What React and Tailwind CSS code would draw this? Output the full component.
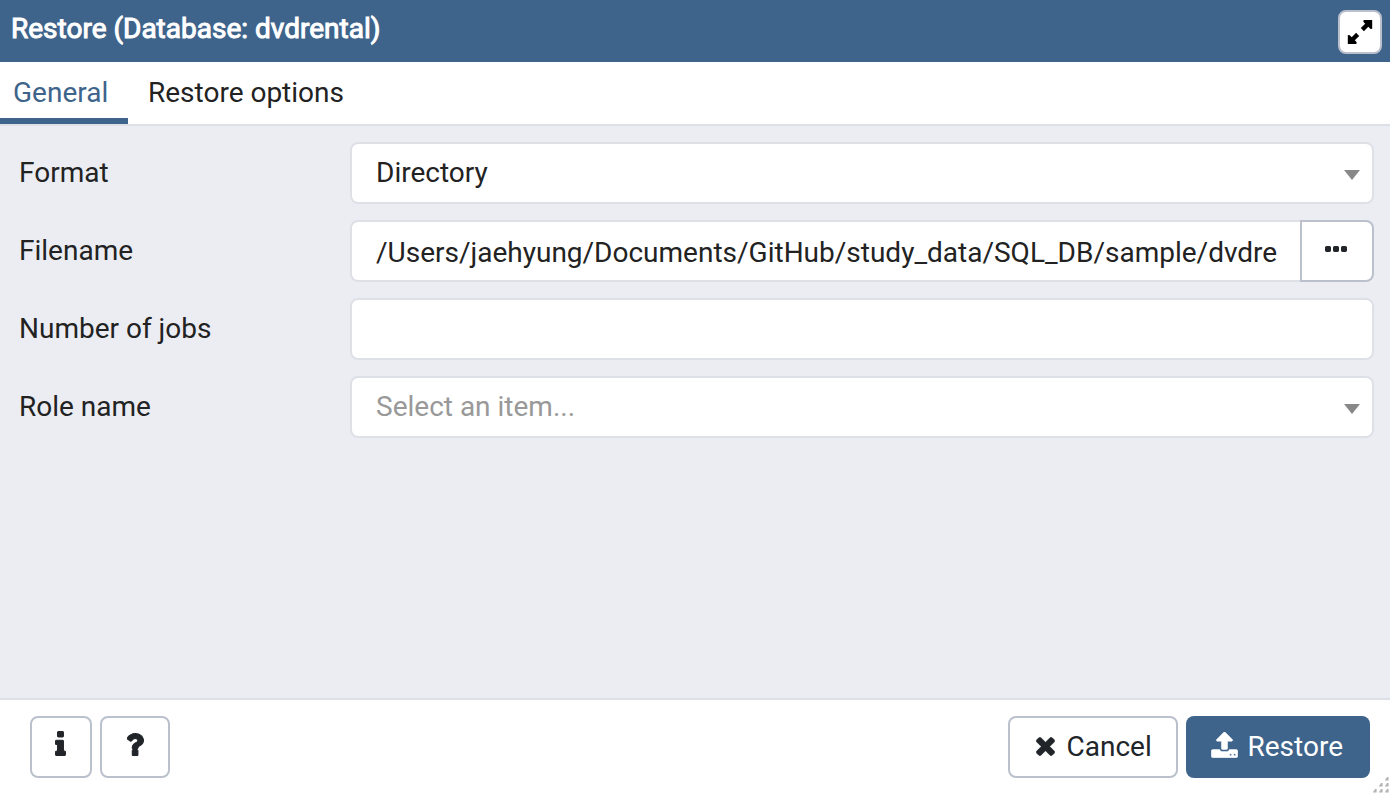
import React from "react";

function Glyph({ box, className, d, weight = 0 }) {
  return (
    <svg viewBox={box} preserveAspectRatio="none" fill="currentColor" className={className} aria-hidden="true">
      <path fillRule="evenodd" d={d} stroke="currentColor" strokeWidth={weight} strokeLinejoin="round" />
    </svg>
  );
}

const TIMES =
  "M1490 1322q0 40-28 68l-136 136q-28 28-68 28t-68-28l-294-294-294 294q-28 28-68 28t-68-28l-136-136q-28-28-28-68t28-68l294-294-294-294q-28-28-28-68t28-68l136-136q28-28 68-28t68 28l294 294 294-294q28-28 68-28t68 28l136 136q28 28 28 68t-28 68l-294 294 294 294q28 28 28 68z";
const UPLOAD =
  "M1344 1472q0-26-19-45t-45-19-45 19-19 45 19 45 45 19 45-19 19-45zm256 0q0-26-19-45t-45-19-45 19-19 45 19 45 45 19 45-19 19-45zm128-224v320q0 40-28 68t-68 28h-1472q-40 0-68-28t-28-68v-320q0-40 28-68t68-28h427q21 56 70.5 92t110.5 36h256q61 0 110.5-36t70.5-92h427q40 0 68 28t28 68zm-325-648q-17 40-59 40h-256v448q0 26-19 45t-45 19h-256q-26 0-45-19t-19-45v-448h-256q-42 0-59-40-17-39 14-69l448-448q18-19 45-19t45 19l448 448q31 30 14 69z";
const INFO =
  "M1216 1344v128q0 26-19 45t-45 19h-512q-26 0-45-19t-19-45v-128q0-26 19-45t45-19h64v-384h-64q-26 0-45-19t-19-45v-128q0-26 19-45t45-19h384q26 0 45 19t19 45v576h64q26 0 45 19t19 45zm-128-1152v192q0 26-19 45t-45 19h-256q-26 0-45-19t-19-45v-192q0-26 19-45t45-19h256q26 0 45 19t19 45z";
const QUESTION =
  "M1088 1256v240q0 16-12 28t-28 12h-240q-16 0-28-12t-12-28v-240q0-16 12-28t28-12h240q16 0 28 12t12 28zm316-600q0 54-15.5 101t-35 76.5-55 59.5-57.5 43.5-61 35.5q-41 23-68.5 65t-27.5 67q0 17-12 32.5t-28 15.5h-240q-15 0-25.5-18.5t-10.5-37.5v-45q0-83 65-156.5t143-108.5q59-27 84-56t25-76q0-42-46.5-74t-107.5-32q-65 0-108 29-35 25-107 115-13 16-31 16-12 0-25-8l-164-125q-13-10-15.5-25t5.5-28q160-266 464-266 80 0 161 31t146 83 106 127.5 41 158.5z";
const ELLIPSIS =
  "M576 736v192q0 40-28 68t-68 28h-192q-40 0-68-28t-28-68v-192q0-40 28-68t68-28h192q40 0 68 28t28 68zm512 0v192q0 40-28 68t-68 28h-192q-40 0-68-28t-28-68v-192q0-40 28-68t68-28h192q40 0 68 28t28 68zm512 0v192q0 40-28 68t-68 28h-192q-40 0-68-28t-28-68v-192q0-40 28-68t68-28h192q40 0 68 28t28 68z";

function Row({ label, children }) {
  return (
    <div className="flex h-[62px]">
      <div className="w-[331px] shrink-0 pt-[10px] leading-[42px]">{label}</div>
      {children}
    </div>
  );
}

function Select({ value, muted }) {
  return (
    <div className="flex flex-1 items-start justify-between rounded-lg border-2 border-[#dde0e6] bg-white pt-2 pr-3 pl-6">
      <span className={muted ? "text-[#999999]" : ""}>{value}</span>
      <svg viewBox="0 0 16 10" className="mt-[18px] h-[10px] w-4" fill="#888888" aria-hidden="true">
        <path d="M0 0h16L8 10z" />
      </svg>
    </div>
  );
}

export default function App() {
  return (
    <div className="flex h-[794px] w-[1390px] flex-col overflow-hidden bg-white font-['Roboto',sans-serif] text-[28px] leading-[42px] text-[#222222]">
      <header className="flex h-[62px] shrink-0 items-start justify-between bg-[#3e648b] pr-2 pl-[11px]">
        <h1 className="pt-2 text-[28px] leading-[42px] font-normal text-white [-webkit-text-stroke:1px_white]">
          Restore (Database: dvdrental)
        </h1>
        <button className="mt-[10px] flex h-11 w-11 items-center justify-center rounded-lg border-2 border-[#bac1cd] bg-white text-black">
          <svg viewBox="0 0 26 26" className="h-[26px] w-[26px]" fill="currentColor" aria-hidden="true">
            <path d="M16.6 1h8.6v8.8l-1.6.2-2.3-2.2-4.4 4.4-3.1-3.1 4.4-4.3-1.8-1.9z" />
            <path d="M9.4 25H.8v-8.8l1.6-.2 2.3 2.2 4.4-4.4 3.1 3.1-4.4 4.3 1.8 1.9z" />
          </svg>
        </button>
      </header>
      <nav className="flex h-16 shrink-0 border-b-2 border-[#dde0e6]">
        <div className="w-32 border-b-[6px] border-[#3e648b] pt-[10px] pl-[13px] text-[#3e648b]">General</div>
        <div className="pt-[10px] pl-5">Restore options</div>
      </nav>
      <main className="flex flex-1 flex-col gap-4 bg-[#ebedf3] pt-4 pr-4 pl-[19px]">
        <Row label="Format">
          <Select value="Directory" />
        </Row>
        <Row label="Filename">
          <div className="flex w-[950px] items-start overflow-hidden rounded-l-lg border-2 border-r-0 border-[#dde0e6] bg-white pt-[10px] pl-6 whitespace-nowrap">
            /Users/jaehyung/Documents/GitHub/study_data/SQL_DB/sample/dvdre
          </div>
          <button className="flex flex-1 items-center justify-center rounded-r-lg border-2 border-[#bac1cd] bg-white pr-0.5 pb-1 text-[#212529]">
            <Glyph box="192 640 1408 384" d={ELLIPSIS} className="h-1.5 w-[22px]" />
          </button>
        </Row>
        <Row label="Number of jobs">
          <div className="flex-1 rounded-lg border-2 border-[#dde0e6] bg-white" />
        </Row>
        <Row label="Role name">
          <Select value="Select an item..." muted />
        </Row>
      </main>
      <footer className="relative flex h-24 shrink-0 items-start justify-between border-t-2 border-[#dde0e6] pt-4 pr-5 pl-[30px] text-[#212529]">
        <div className="flex gap-2">
          <button className="flex h-[62px] w-[62px] items-start rounded-lg border-2 border-[#bac1cd] pt-[13px] pl-[23px]">
            <Glyph box="546 98 700 1468" d={INFO} weight={60} className="h-[25px] w-[11px]" />
          </button>
          <button className="flex h-[62px] w-[70px] items-start rounded-lg border-2 border-[#bac1cd] pt-[15px] pl-[25px]">
            <Glyph box="468 226 966 1340" d={QUESTION} weight={60} className="h-[23px] w-[17px]" />
          </button>
        </div>
        <div className="flex gap-2">
          <button className="flex h-[62px] w-[170px] items-start rounded-lg border-2 border-[#bac1cd] pt-2 pl-[26px]">
            <Glyph box="282 346 1228 1228" d={TIMES} weight={40} className="mt-[11px] mr-[11.5px] h-[19px] w-[19px]" />
            Cancel
          </button>
          <button className="flex h-[62px] w-[184px] items-start rounded-lg bg-[#3e648b] pt-[10px] pl-[25px] text-white">
            <Glyph box="49 68 1694 1611" d={UPLOAD} weight={30} className="mt-1.5 mr-[9.5px] h-[26px] w-[27px]" />
            Restore
          </button>
        </div>
        <svg viewBox="0 0 18 18" className="absolute right-0 bottom-0 h-[18px] w-[18px]" fill="#b5b5b5" aria-hidden="true">
          <path d="M13 4l2-3h1.6v3.4H13zM7 10l2-3h1.6v3.4H7zM13 10l2-3h1.6v3.4H13zM1 16l2-3h1.6v3.4H1zM7 16l2-3h1.6v3.4H7zM13 16l2-3h1.6v3.4H13z" />
        </svg>
      </footer>
    </div>
  );
}
